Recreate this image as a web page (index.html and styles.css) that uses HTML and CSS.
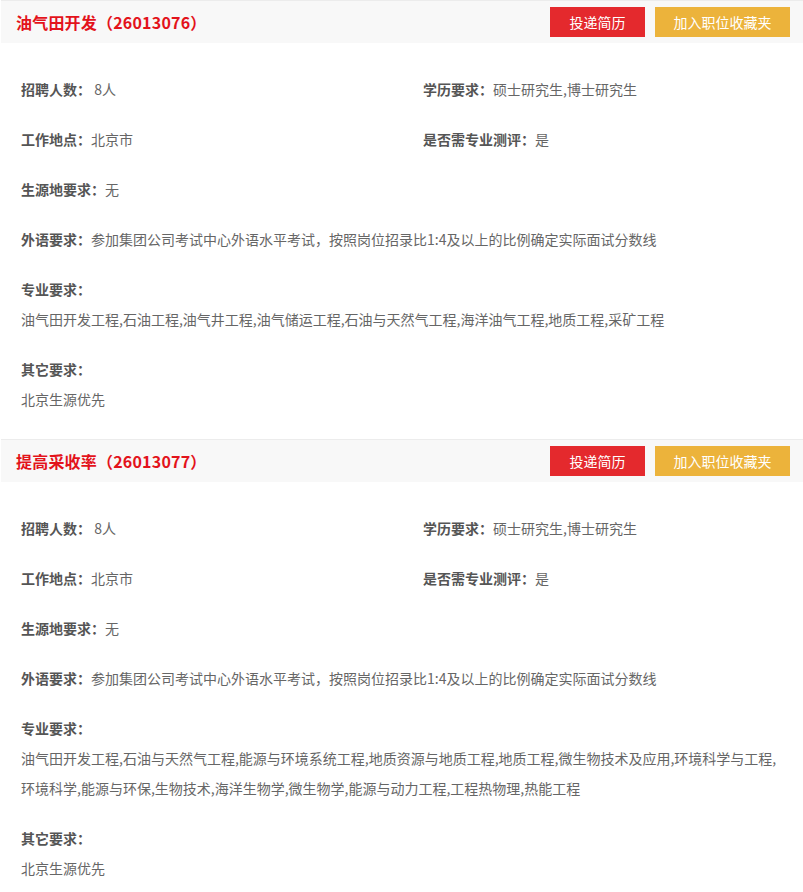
FILE: index.html
```html
<!doctype html>
<html>
    <head>
        <title>职位详情</title>
        <link rel="stylesheet" href="styles.css">
    </head>
    <body>
        <section class="job">
            <div class="job-head">
                <h2 class="job-title">油气田开发（26013076）</h2>
                <div class="job-actions">
                    <button class="btn btn-red">投递简历</button>
                    <button class="btn btn-yellow">加入职位收藏夹</button>
                </div>
            </div>
            <div class="job-body">
                <div class="row two-col">
                    <p><b>招聘人数：</b> 8人</p>
                    <p><b>学历要求：</b>硕士研究生,博士研究生</p>
                </div>
                <div class="row two-col">
                    <p><b>工作地点：</b>北京市</p>
                    <p><b>是否需专业测评：</b>是</p>
                </div>
                <div class="row">
                    <p><b>生源地要求：</b>无</p>
                </div>
                <div class="row">
                    <p><b>外语要求：</b>参加集团公司考试中心外语水平考试，按照岗位招录比1:4及以上的比例确定实际面试分数线</p>
                </div>
                <div class="row">
                    <p><b>专业要求：</b></p>
                    <p>油气田开发工程,石油工程,油气井工程,油气储运工程,石油与天然气工程,海洋油气工程,地质工程,采矿工程</p>
                </div>
                <div class="row">
                    <p><b>其它要求：</b></p>
                    <p>北京生源优先</p>
                </div>
            </div>
        </section>

        <section class="job">
            <div class="job-head">
                <h2 class="job-title">提高采收率（26013077）</h2>
                <div class="job-actions">
                    <button class="btn btn-red">投递简历</button>
                    <button class="btn btn-yellow">加入职位收藏夹</button>
                </div>
            </div>
            <div class="job-body">
                <div class="row two-col">
                    <p><b>招聘人数：</b> 8人</p>
                    <p><b>学历要求：</b>硕士研究生,博士研究生</p>
                </div>
                <div class="row two-col">
                    <p><b>工作地点：</b>北京市</p>
                    <p><b>是否需专业测评：</b>是</p>
                </div>
                <div class="row">
                    <p><b>生源地要求：</b>无</p>
                </div>
                <div class="row">
                    <p><b>外语要求：</b>参加集团公司考试中心外语水平考试，按照岗位招录比1:4及以上的比例确定实际面试分数线</p>
                </div>
                <div class="row">
                    <p><b>专业要求：</b></p>
                    <p>油气田开发工程,石油与天然气工程,能源与环境系统工程,地质资源与地质工程,地质工程,微生物技术及应用,环境科学与工程,环境科学,能源与环保,生物技术,海洋生物学,微生物学,能源与动力工程,工程热物理,热能工程</p>
                </div>
                <div class="row">
                    <p><b>其它要求：</b></p>
                    <p>北京生源优先</p>
                </div>
            </div>
        </section>
    </body>
</html>
```

FILE: styles.css
```css
:root {
    --red: #e4292d;
    --title-red: #e3131b;
    --yellow: #ecb33b;
    --head-bg: #f8f8f8;
    --line: #ececec;
    --label: #555;
    --text: #666;
}

body {
    margin: 0;
    font-family: "Noto Sans CJK SC", "Microsoft YaHei", sans-serif;
    font-size: 14px;
    color: var(--text);
    background: #fff;
}

.job-head {
    display: flex;
    align-items: center;
    justify-content: space-between;
    height: 42px;
    margin-left: 1px;
    padding: 0 13px 0 15px;
    border-top: 1px solid var(--line);
    background: var(--head-bg);
}

.job-title {
    margin: 0;
    font-size: 16px;
    font-weight: bold;
    color: var(--title-red);
    letter-spacing: 0.2px;
}

.job-actions {
    display: flex;
    gap: 10px;
}

.btn {
    all: unset;
    height: 30px;
    line-height: 30px;
    text-align: center;
    font-size: 14px;
    color: #fff;
}

.btn-red {
    width: 95px;
    background: var(--red);
}

.btn-yellow {
    width: 135px;
    background: var(--yellow);
}

.job-body {
    padding: 31px 21px 25px;
}

.row {
    margin-bottom: 20px;
}

.row:last-child {
    margin-bottom: 0;
}

.row p {
    margin: 0;
    line-height: 30px;
}

.two-col {
    display: grid;
    grid-template-columns: 402px 1fr;
}

.row b {
    color: var(--label);
}
```
